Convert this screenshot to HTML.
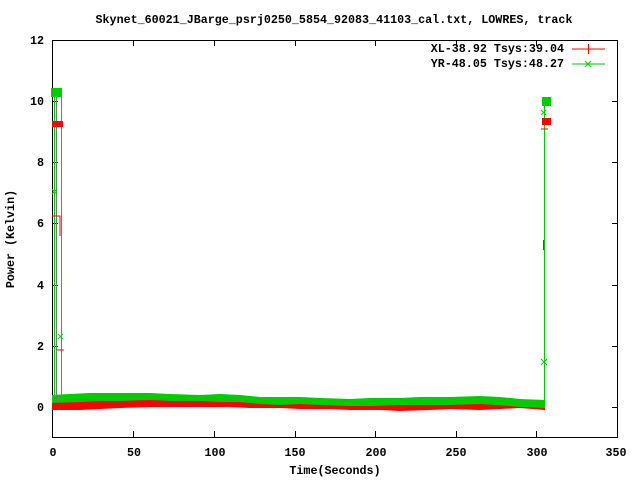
<!DOCTYPE html>
<html><head><style>
html,body{margin:0;padding:0;background:#fff;width:640px;height:480px;overflow:hidden}
text{font-family:"Liberation Mono","DejaVu Sans Mono",monospace;font-size:11.7px;font-weight:bold;fill:#000}
</style></head><body>
<svg width="640" height="480" xmlns="http://www.w3.org/2000/svg">
<text x="334" y="23" text-anchor="middle">Skynet_60021_JBarge_psrj0250_5854_92083_41103_cal.txt, LOWRES, track</text>
<rect x="52.5" y="40.5" width="565" height="397" fill="none" stroke="#000"/>
<g stroke="#000">
<line x1="52" y1="101.5" x2="58" y2="101.5"/><line x1="612" y1="101.5" x2="618" y2="101.5"/>
<line x1="52" y1="162.5" x2="58" y2="162.5"/><line x1="612" y1="162.5" x2="618" y2="162.5"/>
<line x1="52" y1="223.5" x2="58" y2="223.5"/><line x1="612" y1="223.5" x2="618" y2="223.5"/>
<line x1="52" y1="285.5" x2="58" y2="285.5"/><line x1="612" y1="285.5" x2="618" y2="285.5"/>
<line x1="52" y1="346.5" x2="58" y2="346.5"/><line x1="612" y1="346.5" x2="618" y2="346.5"/>
<line x1="52" y1="407.5" x2="58" y2="407.5"/><line x1="612" y1="407.5" x2="618" y2="407.5"/>
<line x1="133.5" y1="437" x2="133.5" y2="431"/><line x1="133.5" y1="40" x2="133.5" y2="46"/>
<line x1="214.5" y1="437" x2="214.5" y2="431"/><line x1="214.5" y1="40" x2="214.5" y2="46"/>
<line x1="295.5" y1="437" x2="295.5" y2="431"/><line x1="295.5" y1="40" x2="295.5" y2="46"/>
<line x1="375.5" y1="437" x2="375.5" y2="431"/><line x1="375.5" y1="40" x2="375.5" y2="46"/>
<line x1="456.5" y1="437" x2="456.5" y2="431"/><line x1="456.5" y1="40" x2="456.5" y2="46"/>
<line x1="536.5" y1="437" x2="536.5" y2="431"/><line x1="536.5" y1="40" x2="536.5" y2="46"/>
</g>
<g text-anchor="end">
<text x="44" y="44">12</text><text x="44" y="105">10</text><text x="44" y="166">8</text>
<text x="44" y="227">6</text><text x="44" y="289">4</text><text x="44" y="350">2</text><text x="44" y="411">0</text>
</g>
<g text-anchor="middle">
<text x="53" y="456">0</text><text x="134" y="456">50</text><text x="215" y="456">100</text>
<text x="295" y="456">150</text><text x="376" y="456">200</text><text x="456" y="456">250</text>
<text x="537" y="456">300</text><text x="616" y="456">350</text>
<text x="335" y="474">Time(Seconds)</text>
</g>
<text transform="translate(14,239) rotate(-90)" text-anchor="middle">Power (Kelvin)</text>
<text x="564" y="52" text-anchor="end">XL-38.92 Tsys:39.04</text>
<text x="564" y="67" text-anchor="end">YR-48.05 Tsys:48.27</text>
<line x1="572" y1="49" x2="605" y2="49" stroke="#f00"/><line x1="588.5" y1="44" x2="588.5" y2="54" stroke="#f00"/>
<line x1="572" y1="64" x2="605" y2="64" stroke="#0c0"/><path d="M585 61l6 6M591 61l-6 6" stroke="#0c0"/>
<polygon fill="#f00" points="52,401 70,402 90,400 100,400 120,399 150,399 180,398 200,399 230,400 250,400 280,400 300,401 330,402 350,403 380,403 400,404 430,403 450,403 480,401 500,402 520,403 545,403 545,410 520,408 500,409 480,410 450,409 430,410 400,411 380,410 350,410 330,409 300,409 280,408 250,408 230,407 200,407 180,407 150,407 120,408 100,409 80,410 60,410 52,410"/>
<polygon fill="#0c0" points="52,395 70,394 90,393 100,393 120,393 150,393 170,394 200,395 220,394 240,395 260,397 280,397 300,397 320,398 350,399 370,398 400,398 420,397 450,397 480,396 500,397 520,399 545,400 545,408 520,407 510,406 480,404 450,405 420,405 400,405 370,406 350,406 320,405 300,404 280,405 260,404 240,402 220,402 200,401 170,401 150,400 120,401 100,401 80,402 52,403"/>
<g fill="none">
<path d="M54.5 400V92M61.5 398V92" stroke="#0c0"/>
<path d="M56.5 402V92" stroke="#777"/>
<path d="M52 216H60V236" stroke="#f00"/>
<path d="M57 350H64" stroke="#f00"/>
<path d="M52 189l5 5M57 189l-5 5M58 334l5 5M63 334l-5 5" stroke="#0c0"/>
</g>
<rect x="51" y="88" width="11" height="9" fill="#0c0"/>
<rect x="52" y="121" width="11" height="6" fill="#f00"/>
<path d="M544.5 400V100" stroke="#0c0"/>
<path d="M543.5 240V250" stroke="#f00"/>
<path d="M541 359l6 6M547 359l-6 6M541 110l5 5M546 110l-5 5" stroke="#0c0"/>
<path d="M541 129H548" stroke="#f00"/>
<rect x="542" y="97" width="9" height="9" fill="#0c0"/>
<rect x="542" y="118" width="9" height="7" fill="#f00"/>
</svg>
</body></html>
